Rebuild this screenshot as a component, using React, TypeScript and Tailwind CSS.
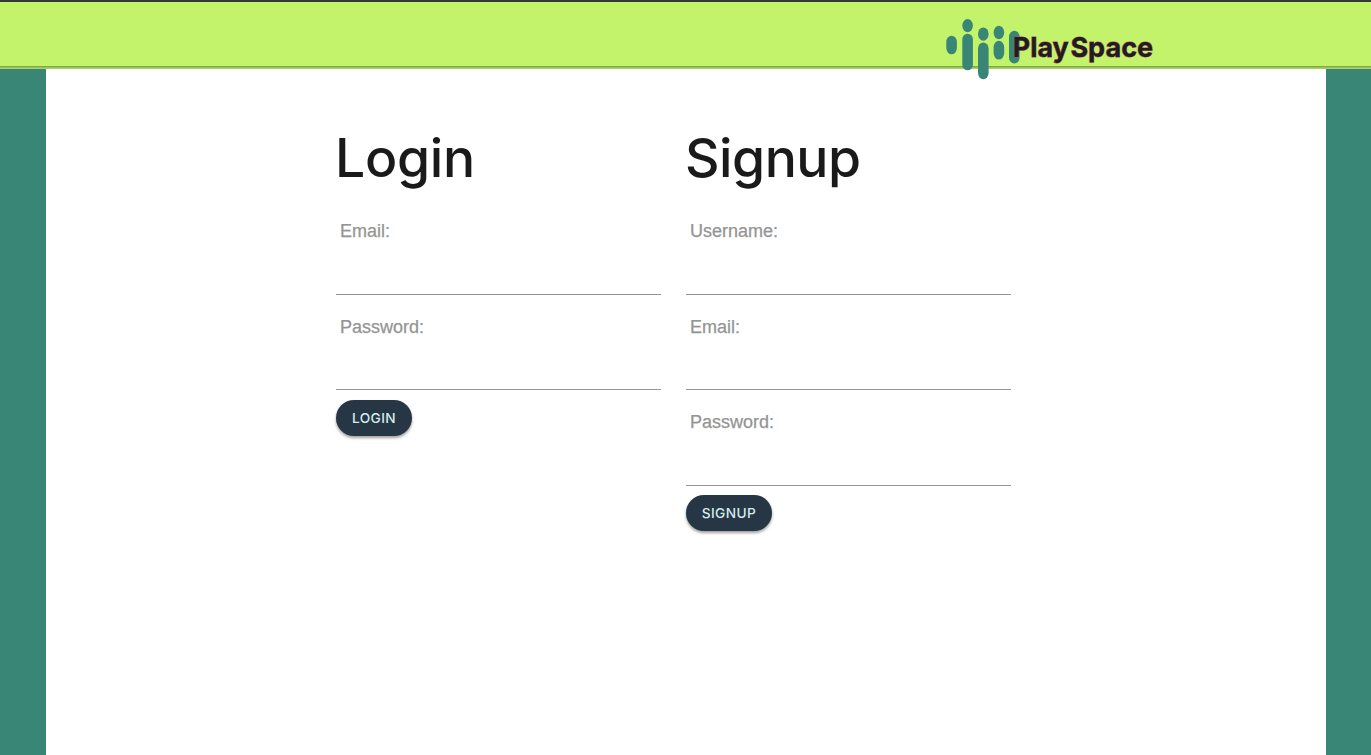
import React from "react";

function Logo() {
  return (
    <svg
      className="absolute left-[940px] top-[14px] h-[70px] w-[220px]"
      viewBox="940 14 220 70"
      role="img"
      aria-label="PlaySpace"
    >
      <g fill="#398676">
        <rect x="946.3" y="35.7" width="10.6" height="18.6" rx="5.3" ry="6.5" />
        <rect x="962.3" y="19" width="10.6" height="13.2" rx="5.3" ry="6.6" />
        <rect x="962.3" y="33.8" width="10.6" height="36.4" rx="5.3" />
        <rect x="978" y="27.4" width="10.6" height="13.4" rx="5.3" ry="6.7" />
        <rect x="978" y="42.4" width="10.6" height="36.8" rx="5.3" ry="6.2" />
        <rect x="993.6" y="25.8" width="10.6" height="13.4" rx="5.3" ry="6.7" />
        <rect x="993.6" y="40.8" width="10.6" height="18.8" rx="5.3" ry="6.5" />
        <rect x="1009" y="30.8" width="10.6" height="32.8" rx="5.3" ry="6.2" />
      </g>
      <g
        className="font-['Inter',sans-serif] text-[27.5px] font-bold"
        fill="#211c20"
        stroke="#b34e62"
        strokeWidth="0.8"
        paintOrder="stroke"
      >
        <text x="1012.8" y="56.5" textLength="56" lengthAdjust="spacingAndGlyphs">
          Play
        </text>
        <text x="1070.4" y="56.5" textLength="82.8" lengthAdjust="spacingAndGlyphs">
          Space
        </text>
      </g>
    </svg>
  );
}

function Field({ label, type, height }: { label: string; type: string; height: string }) {
  return (
    <label className={`flex flex-col border-b border-[#949494] ${height}`}>
      <span className="pl-1 text-[18px] leading-[22px] text-[#949494] [-webkit-text-stroke:0.25px_#949494]">{label}</span>
      <input type={type} className="min-h-0 w-full flex-1 bg-transparent px-1 outline-none" />
    </label>
  );
}

function SubmitButton({ children, width }: { children: string; width: string }) {
  return (
    <button
      className={`h-9 rounded-full bg-[#263645] pt-px font-['Inter',sans-serif] text-[13.7px] font-medium tracking-[0.4px] text-[#d3ece9] shadow-[0_2px_3px_rgba(0,0,0,0.38)] ${width}`}
    >
      {children}
    </button>
  );
}

export default function App() {
  return (
    <div className="flex h-screen flex-col overflow-hidden bg-[#398676] font-['Liberation_Sans',sans-serif]">
      <header className="relative h-[69px] shrink-0 border-t-2 border-[#363636] bg-[#c2f36b]">
        <div className="flex h-full flex-col justify-end">
          <div className="h-px bg-[#84a54b]" />
          <div className="h-px bg-[#99c153]" />
          <div className="h-px bg-[#a8d35c]" />
        </div>
        <div className="absolute -top-[2px] left-0">
          <Logo />
        </div>
      </header>
      <main className="ml-[46px] flex w-[1280px] flex-1 items-start gap-[25px] bg-white pl-[290px] pt-[56px]">
        <form className="w-[325px]">
          <h1 className="-ml-px mb-[29px] h-[66px] font-['Inter',sans-serif] text-[53.5px] font-medium leading-[66px] tracking-[-0.3px] text-[#1a1a1a]">
            Login
          </h1>
          <div className="flex flex-col gap-[21px]">
            <Field label="Email:" type="email" height="h-[75px]" />
            <Field label="Password:" type="password" height="h-[74px]" />
          </div>
          <div className="mt-[10px]">
            <SubmitButton width="w-[76px]">LOGIN</SubmitButton>
          </div>
        </form>
        <form className="w-[325px]">
          <h1 className="-ml-px mb-[29px] h-[66px] font-['Inter',sans-serif] text-[53.5px] font-medium leading-[66px] tracking-[-0.5px] text-[#1a1a1a]">
            Signup
          </h1>
          <div className="flex flex-col gap-[21px]">
            <Field label="Username:" type="text" height="h-[75px]" />
            <Field label="Email:" type="email" height="h-[74px]" />
            <Field label="Password:" type="password" height="h-[75px]" />
          </div>
          <div className="mt-[9px]">
            <SubmitButton width="w-[86px]">SIGNUP</SubmitButton>
          </div>
        </form>
      </main>
    </div>
  );
}
